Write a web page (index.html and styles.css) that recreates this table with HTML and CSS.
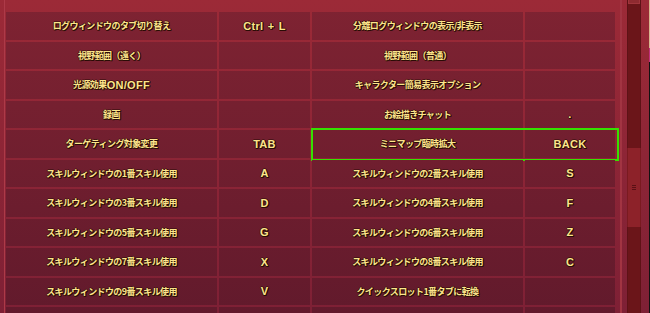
FILE: index.html
```html
<!DOCTYPE html>
<html lang="ja">
<head>
<meta charset="utf-8">
<link rel="stylesheet" href="styles.css">
</head>
<body>
<div class="frame">
  <div class="rows">
    <div class="row">
      <div class="pair"><div class="cell name">ログウィンドウのタブ切り替え</div><div class="cell key"><span class="en">Ctrl + L</span></div></div>
      <div class="pair"><div class="cell name">分離ログウィンドウの表示/非表示</div><div class="cell key"></div></div>
    </div>
    <div class="row">
      <div class="pair"><div class="cell name">視野範囲（遠く）</div><div class="cell key"></div></div>
      <div class="pair"><div class="cell name">視野範囲（普通）</div><div class="cell key"></div></div>
    </div>
    <div class="row">
      <div class="pair"><div class="cell name">光源効果<span class="en">ON/OFF</span></div><div class="cell key"></div></div>
      <div class="pair"><div class="cell name">キャラクター簡易表示オプション</div><div class="cell key"></div></div>
    </div>
    <div class="row">
      <div class="pair"><div class="cell name">録画</div><div class="cell key"></div></div>
      <div class="pair"><div class="cell name">お絵描きチャット</div><div class="cell key"><span class="en">.</span></div></div>
    </div>
    <div class="row">
      <div class="pair"><div class="cell name">ターゲティング対象変更</div><div class="cell key"><span class="en">TAB</span></div></div>
      <div class="pair is-active"><div class="cell name">ミニマップ臨時拡大</div><div class="cell key"><span class="en">BACK</span></div></div>
    </div>
    <div class="row">
      <div class="pair"><div class="cell name">スキルウィンドウの1番スキル使用</div><div class="cell key"><span class="en">A</span></div></div>
      <div class="pair"><div class="cell name">スキルウィンドウの2番スキル使用</div><div class="cell key"><span class="en">S</span></div></div>
    </div>
    <div class="row">
      <div class="pair"><div class="cell name">スキルウィンドウの3番スキル使用</div><div class="cell key"><span class="en">D</span></div></div>
      <div class="pair"><div class="cell name">スキルウィンドウの4番スキル使用</div><div class="cell key"><span class="en">F</span></div></div>
    </div>
    <div class="row">
      <div class="pair"><div class="cell name">スキルウィンドウの5番スキル使用</div><div class="cell key"><span class="en">G</span></div></div>
      <div class="pair"><div class="cell name">スキルウィンドウの6番スキル使用</div><div class="cell key"><span class="en">Z</span></div></div>
    </div>
    <div class="row">
      <div class="pair"><div class="cell name">スキルウィンドウの7番スキル使用</div><div class="cell key"><span class="en">X</span></div></div>
      <div class="pair"><div class="cell name">スキルウィンドウの8番スキル使用</div><div class="cell key"><span class="en">C</span></div></div>
    </div>
    <div class="row">
      <div class="pair"><div class="cell name">スキルウィンドウの9番スキル使用</div><div class="cell key"><span class="en">V</span></div></div>
      <div class="pair"><div class="cell name">クイックスロット1番タブに転換</div><div class="cell key"></div></div>
    </div>
    <div class="row">
      <div class="pair"><div class="cell name"></div><div class="cell key"></div></div>
      <div class="pair"><div class="cell name"></div><div class="cell key"></div></div>
    </div>
  </div>
</div>
<div class="scrollbar">
  <div class="cap"></div>
  <div class="thumb"><span></span><span></span><span></span></div>
</div>
<div class="edge"></div>
</body>
</html>
```

FILE: styles.css
```css
html, body {
  margin: 0;
  padding: 0;
}
body {
  width: 650px;
  height: 313px;
  overflow: hidden;
  display: flex;
  background: linear-gradient(#9c2a37, #7e2035) fixed;
  font-family: "Noto Sans CJK JP", sans-serif;
}
.frame {
  margin-left: 4px;
  width: 611px;
  padding: 12px 3px 0 1px;
  border-left: 1px solid #ad3a48;
  border-right: 2px solid #a23442;
  height: 313px;
  box-sizing: content-box;
  flex: none;
  overflow: hidden;
  box-sizing: border-box;
  width: 618px;
}
.rows {
  display: flex;
  flex-direction: column;
  gap: 2px;
}
.row {
  display: flex;
  gap: 2px;
  height: 27.5px;
  flex: none;
}
.pair {
  display: flex;
  gap: 2px;
  position: relative;
}
.cell {
  display: flex;
  align-items: center;
  justify-content: center;
  background: linear-gradient(#7f2332, #621a2c) fixed;
  color: #fde58c;
  font-weight: 700;
  font-size: 9px;
  letter-spacing: -0.6px;
  white-space: nowrap;
  text-shadow: 1px 1px 0 #2a0c05, 0 1px 0 #2a0c05, 1px 0 0 #2a0c05, -1px 0 0 rgba(42,12,5,.55), 0 -1px 0 rgba(42,12,5,.55);
}
.name { width: 211px; }
.key { width: 90px; }
.pair:first-child .key { width: 91px; }
.en {
  font-family: "Liberation Sans", Arial, sans-serif;
  font-size: 11px;
  letter-spacing: 0.3px;
  font-weight: 700;
  word-spacing: 1px;
}
.is-active::after {
  content: "";
  position: absolute;
  left: -1px;
  right: -4px;
  top: -2px;
  bottom: -3px;
  border: 2px solid #35e000;
  pointer-events: none;
}
.scrollbar {
  flex: none;
  margin-left: 5px;
  width: 14px;
  height: 313px;
  background: #6b1519;
  box-shadow: inset 1px 0 0 #5e1216, inset -1px 0 0 #5e1216;
}
.cap {
  height: 4px;
  background: #8f2a30;
  border: 1px solid #a0353b;
  border-top: 0;
  box-sizing: border-box;
  margin: 0 1px;
}
.thumb {
  margin-top: 144px;
  height: 79px;
  background: #8d2229;
  box-shadow: inset 1px 0 0 #7a1a20, inset -1px 0 0 #7a1a20;
  display: flex;
  flex-direction: column;
  align-items: center;
  justify-content: center;
  gap: 1px;
}
.thumb span {
  width: 4px;
  height: 1px;
  background: #5a1014;
}
.edge {
  flex: none;
  margin-left: 8px;
  width: 3px;
  height: 313px;
  background: linear-gradient(#d8b48e 0 48px, #c0307a 48px 62px, #111 62px);
}
```
